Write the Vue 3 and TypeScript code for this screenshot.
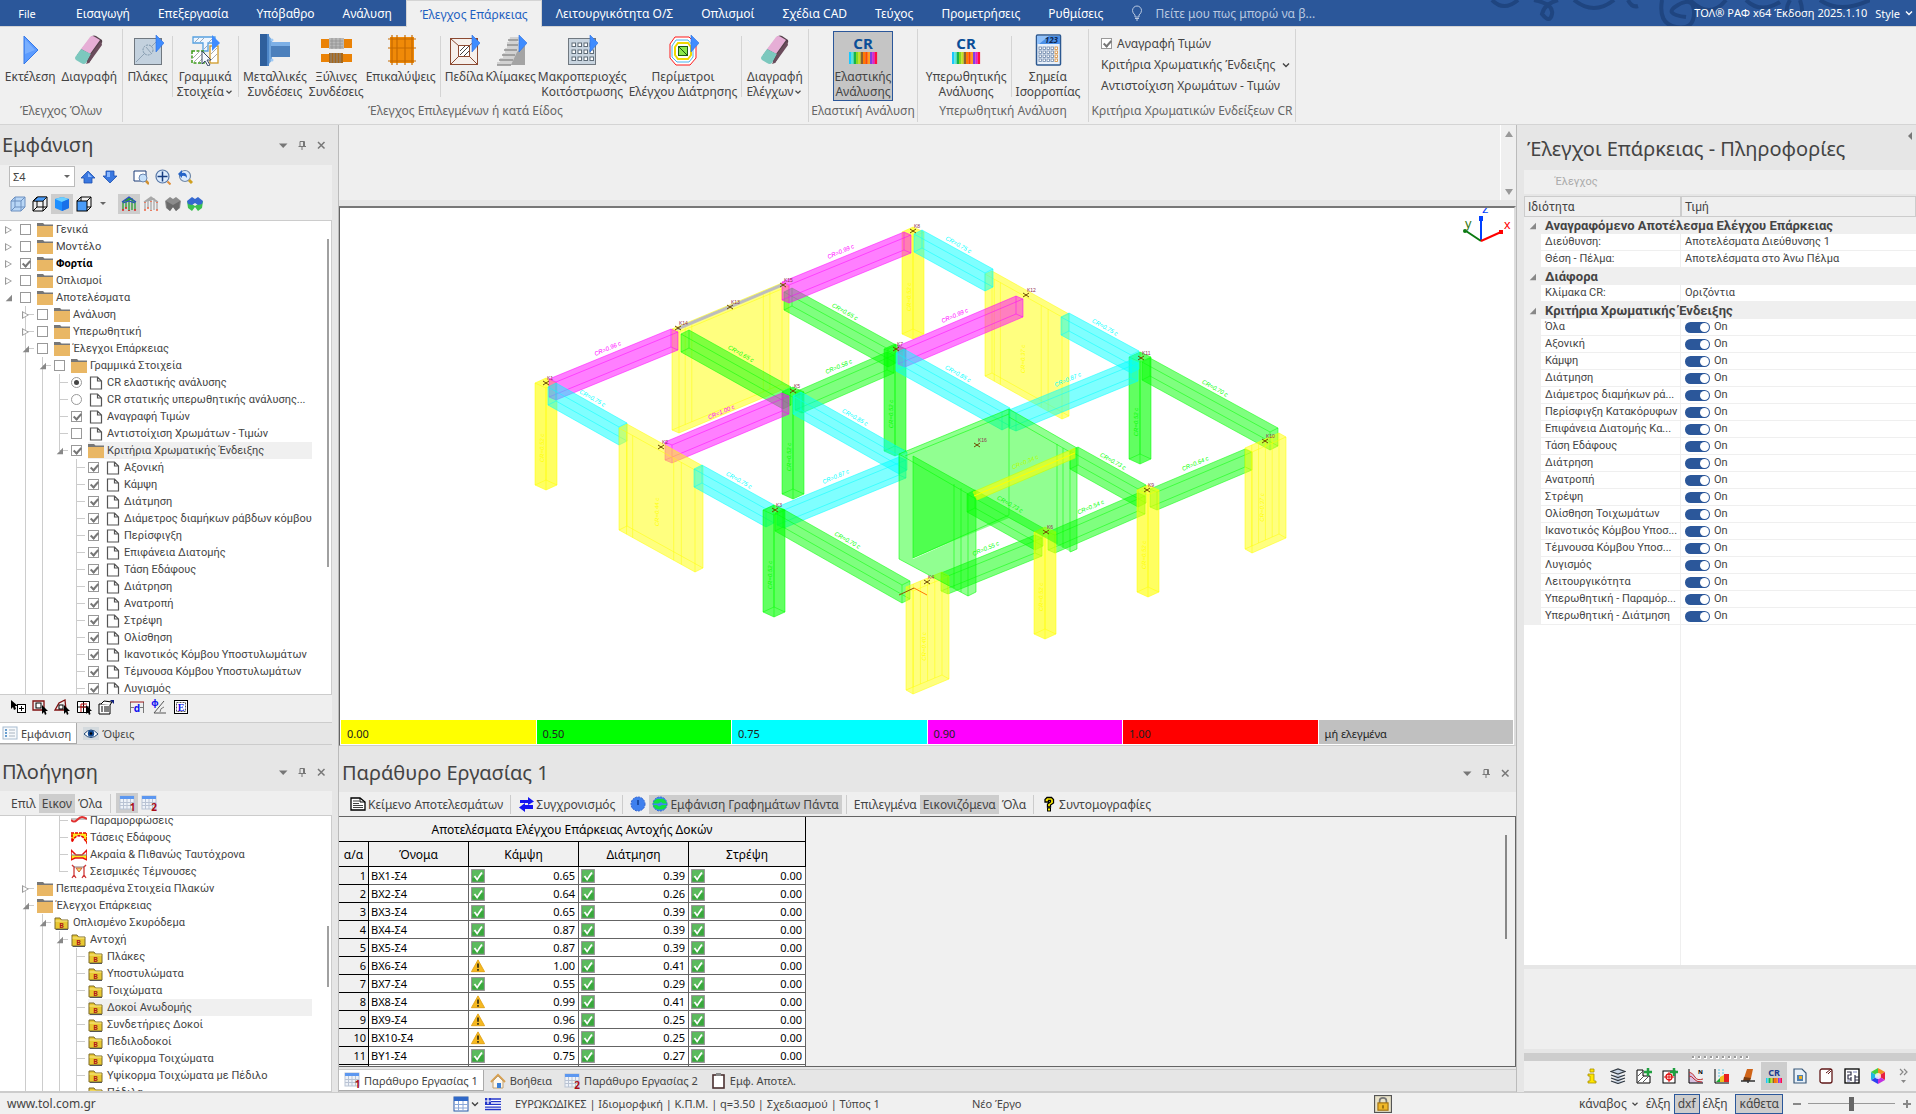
<script setup lang="ts">
import { ref } from 'vue'

/* ---------- icons ---------- */
const play = '<path d="M24 1l8 8-8 9z" fill="#3f8cff" stroke="#2a6fe0" stroke-width=".6"/>'
const table16 =
  '<rect x="1" y="1" width="14" height="13" fill="#eef2f8" stroke="#b9c3d4" stroke-width="1"/><rect x="1" y="1" width="14" height="3" fill="#5c97f0"/><path d="M1 7.500h14M1 10.500h14M4.500 4v10M8 4v10M11.500 4v10" stroke="#b9c3d4" stroke-width="1"/>'
const folderB =
  '<path d="M1 3h5l1.500 2H14v9H1z" fill="#e8c832" stroke="#7d6a2a"/><path d="M1.500 5.500h12v1h-12z" fill="#fbe98a"/><path d="M14 14.500H2" stroke="#555"/><text x="7.500" y="13" font-size="7" font-weight="700" fill="#b01818" text-anchor="middle" font-family="Noto Sans">B</text>'
const rainbow = (x: number, y: number, w: number, h: number) =>
  ['#19c8ff', '#58e6d8', '#18b34a', '#86d820', '#c8e020', '#8a6030', '#ff7a00', '#ff4a00', '#ff9a20', '#8040e0', '#e020d0', '#ff1040']
    .map((c, i, a) => `<rect x="${x + (i * w) / a.length}" y="${y}" width="${w / a.length + 0.1}" height="${h}" fill="${c}"/>`)
    .join('')

const icons: Record<string, string> = {
  run: '<path d="M10 2l14 14-14 14z" fill="#5b9bff" stroke="#3478e8"/><path d="M11 5l10 11-10 4z" fill="#8dbcff" opacity=".6"/>',
  eraser:
    '<path d="M19 2q2-1 4 0l6 4q1 2-1 4L16 29l-12-8z" fill="#54404a"/><path d="M17 3q2-2 5 0l5 3L17 20 8 15z" fill="#e6aed6"/><path d="M8 15l10 5-5 9q-2 2-5 0l-5-3q-2-2 0-4z" fill="#7cc8be"/><path d="M18 20L28 7l1 4-13 18-3 1z" fill="#6b4c5c"/>',
  slab: `<rect x="2.500" y="4.500" width="27" height="26" fill="#c3d1de" stroke="#707880"/><circle cx="16" cy="16" r="5" fill="none" stroke="#7d95aa" stroke-dasharray="2 1"/><path d="M4 28l9-9M19 13l5-5M14 13l5 6" stroke="#8fa3b5"/>${play}`,
  linear: `<path d="M4 3h22v6h-7v8h-5V9H4z" fill="#eef6ff" stroke="#55a0e0" stroke-width="1.300"/><path d="M6 8l4-4M11 8l4-4M15 15l4-4M20 8l4-4" stroke="#9ab"/><rect x="3" y="17" width="12" height="12" fill="#fff" stroke="#3c9a18" stroke-width="1.500" stroke-dasharray="3 1.500"/><path d="M4 24l6-6M5 28l9-9M10 28l5-5" stroke="#aaa"/><rect x="21" y="12" width="8" height="17" fill="#fff" stroke="#d09a28" stroke-width="1.300"/><path d="M22 20l6-6M22 26l6-6" stroke="#aaa"/><path d="M13 17v13l3-3 3 5 2-1-3-5h4z" fill="#f6f9ff" stroke="#3a4a68"/><path d="M23 1l8 8-8 8z" fill="#3f8cff"/>`,
  metal:
    '<path d="M1 0h9v32H1z" fill="#2f5f9c"/><path d="M8 0h2v32H8z" fill="#4d86c8"/><path d="M10 2l3 4v20l-3 4z" fill="#6fa4dc"/><path d="M12 8h19v15H12z" fill="#4c80bc"/><path d="M12 8h19v4H12z" fill="#7db0e6"/><circle cx="13" cy="6" r="1.500" fill="#9cc8f4"/><circle cx="13" cy="26" r="1.500" fill="#9cc8f4"/>',
  wood:
    '<rect x="1" y="5" width="31" height="9" fill="#ea8206"/><rect x="9" y="4" width="15" height="11" fill="#b8b8b8"/><path d="M10 7h13M10 10h13M10 13h13M12 4v11M16 4v11M20 4v11" stroke="#8d8d8d" stroke-width=".7"/><path d="M1 20h31v8H1z" fill="#ea8206"/><path d="M9 19h14v10H9z" fill="#a8681a"/><path d="M11 19v10M14 19v10M17 19v10M20 19v10" stroke="#8a8a8a"/>',
  overlay:
    '<rect x="5" y="3" width="24" height="26" fill="#f08a08"/><path d="M3 5h28M3 14h28M3 27h28M7 1v30M12 1v30M20 1v30M27 1v30" stroke="#c66a00" stroke-width="1.200"/>',
  footing: `<rect x="2.500" y="4.500" width="27" height="26" fill="#f6f0ec" stroke="#8c4a32"/><rect x="10.500" y="11.500" width="11" height="11" fill="#fff" stroke="#8c4a32"/><path d="M3 5l8 7M29 5l-8 7M3 30l8-8M29 30l-8-8" stroke="#8c4a32"/><path d="M12 17l5-5M12 21l9-9M16 22l5-5" stroke="#444"/>${play}`,
  stairs: `<path d="M15 3h10v4h-3l8 8v16H2v-3h3v-4h3v-5h2v-5h2V8h2z" fill="#d2d2d2"/><path d="M13 6h10M12 11h11M9 16h13M7 21h13M4 26h14M2 31h14" stroke="#909090" stroke-width="1.500"/><path d="M22 18l8-7v20H16z" fill="#a4a4a4"/>${play}`,
  macro: `<rect x="2.500" y="4.500" width="27" height="26" fill="#c8d4df" stroke="#707880"/>${[0, 1, 2, 3].map((c) => [0, 1, 2].map((r) => `<rect x="${6 + c * 6}" y="${9 + r * 7}" width="3.500" height="3.500" fill="#fff" stroke="#5f6c78"/>`).join('')).join('')}${play}`,
  perimeter: `<path d="M8 3h14l7 7v14l-6 7H9l-6-7V10z" fill="#fff" stroke="#ff1818"/><path d="M9 6h12l5 6v11l-4 5H10l-5-5V12z" fill="#fff" stroke="#48b4f0"/><path d="M11 9h10l3 4v8l-3 4H11l-3-4v-8z" fill="#fff" stroke="#f0d800" stroke-width="2"/><rect x="11.500" y="12.500" width="9" height="9" fill="#8ce84c" stroke="#1b5a10"/><path d="M12 13l8 8" stroke="#1b5a10"/>${play}`,
  cr: `<text x="16" y="15" font-size="15" font-weight="700" fill="#0a4e98" text-anchor="middle" font-family="Noto Sans">CR</text>${rainbow(2, 18, 28, 12)}`,
  calc: '<rect x="4.500" y="1" width="24" height="30" rx="1" fill="#e8f0fa" stroke="#2c5890" stroke-width="1.500"/><rect x="5" y="2" width="23" height="8" fill="#4a90e8"/><path d="M5 2h12L7 10H5z" fill="#8fc0fa"/><text x="26" y="9" font-size="8" font-weight="700" font-style="italic" fill="#102850" text-anchor="end" font-family="Noto Sans">123</text>' +
    [0, 1, 2, 3, 4].map((c) => [0, 1, 2, 3].map((r) => `<rect x="${7 + c * 4}" y="${13 + r * 4}" width="2.500" height="2.500" fill="#fff" stroke="${c === 4 ? '#d88a30' : '#6a84a8'}" stroke-width=".8"/>`).join('')).join(''),
  up: '<path d="M8 2l7 7h-3v5H4V9H1z" fill="#3a78e0" stroke="#1c4fb0" stroke-width=".8"/><path d="M8 4l4 4H8z" fill="#8ab8ff"/>',
  down: '<path d="M8 14l7-7h-3V2H4v5H1z" fill="#3a78e0" stroke="#1c4fb0" stroke-width=".8"/><path d="M5 3h3v5H5z" fill="#8ab8ff"/>',
  zoomwin: '<path d="M1 2h12v10H1z" fill="#fff" stroke="#1c3c78"/><circle cx="10" cy="9" r="4" fill="#c6e0fa" stroke="#6a86b0"/><path d="M13 12l3 3" stroke="#d09030" stroke-width="2.500"/>',
  zoomall: '<circle cx="7.500" cy="7.500" r="6.500" fill="#dcebfc" stroke="#5878a8" stroke-width="1.200"/><path d="M7.500 2.500v10M2.500 7.500h10" stroke="#173c80" stroke-width="1.500"/><path d="M12.500 12.500l3 3" stroke="#e09040" stroke-width="2"/>',
  zoomprev: '<circle cx="8" cy="7" r="5.500" fill="#dcebfc" stroke="#7088a8" stroke-width="1.200"/><path d="M1 5l4-4v3q5-1 5 5-2-3-5-2v2z" fill="#2464c8"/><path d="M12 11l3 3" stroke="#d0a020" stroke-width="3"/>',
  cubeA: '<path d="M1 5l4-4h10v10l-4 4H1z" fill="#b8d6f6" stroke="#6c90c0"/><path d="M1 5h10v10M11 5l4-4M5 1v10h10M5 11l-4 4" stroke="#6c90c0" fill="none"/>',
  cubeB: '<path d="M1 5h10v10H1zM5 1h10v10H5zM1 5l4-4M11 5l4-4M11 15l4-4M1 15l4-4" fill="none" stroke="#000"/><path d="M2 5l4-4h9l-4 4z" fill="#4a9cf8" stroke="#000" stroke-width=".6"/>',
  cubeC: '<path d="M8 1l7 2v9l-7 3-7-3V3z" fill="#1f8fff"/><path d="M8 1l7 2-7 3-7-3z" fill="#6cd0ff"/><path d="M8 6l7-3v9l-7 3z" fill="#1a70e8"/>',
  cubeD: '<path d="M5 1h10v10H5zM1 5l4-4M11 5l4-4M11 15l4-4M1 15l4-4" fill="none" stroke="#000"/><rect x="1" y="5" width="10" height="10" fill="#4a9cf8" stroke="#000"/>',
  frameA: '<path d="M2 14V6l6-4 6 4v8M5 12V5l6-2v8M8 2v13M11 4v10" fill="none" stroke="#2a9c30" stroke-width="1.300"/><path d="M1 6l7-5 7 5M2 7l6-2 6 2" fill="none" stroke="#2850c0" stroke-width="1.300"/><path d="M2 13v2M5 11v2M8 14v1M14 13v2" stroke="#e02020" stroke-width="1.500"/>',
  frameB: '<path d="M2 14V6l6-4 6 4v8M5 12V5l6-2v8M8 2v13M11 4v10M1 6l7-5 7 5" fill="none" stroke="#a8a8a8" stroke-width="1.300"/><path d="M2 13v2M5 11v2M8 14v1M14 13v2M2 6v1M8 5v1M14 6v1" stroke="#f07050" stroke-width="1.600"/>',
  shadeA: '<path d="M0 5l5-4 3 2 3-2 5 4-1 7-4 3-3-4-3 4-4-3z" fill="#8c8c8c"/><path d="M1 5l7 4 7-4-1 7-3 3-3-4-3 4-3-3z" fill="#6a6a6a"/>',
  shadeB: '<path d="M0 5l8 5 8-5-1 7-4 3-3-4-3 4-4-3z" fill="#3cc050"/><path d="M0 5l5-4 3 2 3-2 5 4-1 3-4 1-3-2-3 2-4-1z" fill="#3468d0"/>',
  folder: '<path d="M0 1h6l1.500 1.500H16V4H0z" fill="#777"/><rect x="0" y="4" width="16" height="11" fill="#e9b765"/>',
  doc: '<path d="M2.500 2h7l4 4v8h-11zM9.500 2v4h4" fill="#fff" stroke="#555" stroke-width="1.200"/>',
  folderB,
  deform: '<path d="M0 6h16" stroke="#888"/><path d="M0 7q3 3 6 0t5-3 5 2" fill="none" stroke="#e03030" stroke-width="2"/>',
  stress: '<path d="M0 3h16v10l-5-7q-5-3-7 2L1 12z" fill="#ffe820"/><path d="M0 3h16v10l-4-6Q5 3 1 12V4" fill="none" stroke="#e80000" stroke-width="1.600" stroke-dasharray="3 1"/>',
  extreme: '<path d="M0 8h16v5q-8-5-16 0z" fill="#ffe820"/><path d="M0 3v10l4-2h8l4 2V3l-5 5H5z" fill="none" stroke="#e81010" stroke-width="1.500"/><path d="M0 8h16" stroke="#888"/>',
  seismic: '<path d="M3 2v10M13 2v10M1 14l2-3 2 3M11 14l2-3 2 3M1 1l3 3M15 1l-3 3" fill="none" stroke="#d03838" stroke-width="1.300"/><path d="M3 3h10" stroke="#888"/><path d="M5 4h6L8 8z" fill="#f0e070" stroke="#d06038"/>',
  selAdd: '<path d="M1 1v9l2-2 1 3 2-1-1-3h3z" fill="#000"/><rect x="7.500" y="5.500" width="8" height="8" fill="#fff" stroke="#000"/><path d="M11.500 7v5M9 9.500h5" stroke="#000"/>',
  selRect: '<path d="M1 2h11v9H1z" fill="none" stroke="#801010" stroke-width="1.300"/><rect x="4" y="4" width="5" height="5" fill="#fff" stroke="#000"/><path d="M10 6v9l2-2 1 3 1.500-1-1-3H16z" fill="#000"/>',
  selPoly: '<path d="M1 11l4-7 6-3 1 10z" fill="none" stroke="#801010" stroke-width="1.300"/><rect x="5" y="6" width="4" height="4" fill="#fff" stroke="#000"/><path d="M10 6v9l2-2 1 3 1.500-1-1-3H16z" fill="#000"/>',
  selFence: '<path d="M1.500 2.500h12v11h-12zM1.500 8h12M7.500 2.500v11" fill="#fff" stroke="#000"/><path d="M5 13V5h6M4 8h6" stroke="#c01010" fill="none"/><path d="M10 6v9l2-2 1 3 1.500-1-1-3H16z" fill="#000"/>',
  props: '<path d="M1 5h11v10H1z" fill="#fff" stroke="#000"/><path d="M3 8h2M3 10h2M3 12h2M6 8h5M6 10h5M6 12h5" stroke="#000"/><path d="M3 5l3-3 8 1-2 3" fill="#fff" stroke="#000"/><path d="M12 1h4v4z" fill="#102080"/>',
  dimD: '<path d="M1.500 3v11M14.500 3v11M2 8.500h3M11 8.500h3" stroke="#777"/><path d="M1 3h14" stroke="#a01818"/><text x="8" y="13" font-size="10" font-weight="700" fill="#1010f0" text-anchor="middle" font-family="Noto Sans">d</text>',
  phi: '<path d="M3 14L13 2M3 14h12" stroke="#555"/><path d="M13 8q-4 1-4 5" fill="none" stroke="#777"/><text x="4" y="7" font-size="9" font-weight="700" fill="#1010f0" text-anchor="middle" font-family="Noto Sans">φ</text>',
  boxE: '<rect x="1.500" y="1.500" width="13" height="13" fill="#fff" stroke="#000"/><rect x="3.500" y="3.500" width="9" height="9" fill="none" stroke="#555" stroke-dasharray="2 1"/><text x="8" y="12" font-size="10" font-weight="700" fill="#1010f0" text-anchor="middle" font-family="Liberation Serif">E</text>',
  list: '<rect x="1" y="2" width="14" height="12" fill="#f6f9fc" stroke="#a8bcd0"/><path d="M3 5h2M3 8h2M3 11h2" stroke="#3a80c0" stroke-width="1.500"/><path d="M7 5h6M7 8h6M7 11h6" stroke="#a8b4c0"/>',
  eye: '<rect x="0" y="1" width="16" height="13" fill="#d4dade"/><path d="M1 8q7-8 14 0-7 7-14 0z" fill="#fff" stroke="#204878"/><circle cx="8" cy="7.500" r="3.200" fill="#104890"/><circle cx="8" cy="7.500" r="1.300" fill="#000"/>',
  win1: `${table16}<text x="13.500" y="15.500" font-size="10" font-weight="700" fill="#a80c18" text-anchor="middle" font-family="Noto Sans">1</text>`,
  win2: `${table16}<text x="13" y="15.500" font-size="10" font-weight="700" fill="#a80c18" text-anchor="middle" font-family="Noto Sans">2</text>`,
  grid: '<rect x="1" y="1" width="14" height="14" fill="#fff" stroke="#2858a8"/><rect x="1" y="1" width="14" height="4" fill="#2f68c8"/><path d="M1 8.500h14M1 12h14M5.500 5v10M10 5v10" stroke="#8aa8d8"/>',
  text: '<path d="M1 2h9l5 4v8H1z" fill="#fff" stroke="#000" stroke-width="1.300"/><path d="M10 2v4h5" fill="none" stroke="#000"/><path d="M3 5h6M3 7.500h6M3 9.500h10M3 11.500h10" stroke="#444"/>',
  sync: '<path d="M2 4h8V1l6 4.500L10 9V7H2zM15 9H7V7l-6 4.500L7 16v-3h8z" fill="#1414f0"/>',
  clock: '<circle cx="8" cy="8" r="7" fill="#3f80ee" stroke="#2b5fd0" stroke-dasharray="2 1"/><path d="M8 4v5" stroke="#123c90" stroke-width="1.500"/>',
  globe: '<circle cx="8" cy="8" r="7" fill="#4088f0" stroke="#2b66d8" stroke-dasharray="2 1"/><path d="M1 7.500Q3 2 8 3q5-1 7 4.500h-4L9 6 6 7.500z" fill="#10e040"/><path d="M1 9h4l2 1.500L10 9h5q-2 5-7 4.500Q3 14 1 9z" fill="#10e040"/>',
  help: '<path d="M4 5V3.500L6 1.500h4.500l2 2V7L9.500 9v2h-3V8l3-2V4.500h-2V6H4z" fill="#ffee00" stroke="#000" stroke-width="1.300"/><rect x="6.500" y="12" width="3" height="3" fill="#ffee00" stroke="#000"/>',
  home: '<path d="M1 9l7-7 7 7" fill="none" stroke="#d8a050" stroke-width="2"/><path d="M3 8l5-5 5 5v7H3z" fill="#fdf8ee" stroke="#c0a070"/><rect x="7" y="10" width="4" height="5" fill="#3a80d8"/>',
  clip: '<rect x="3" y="2" width="11" height="13" fill="#fff" stroke="#4a3030" stroke-width="1.600"/><rect x="6" y="0" width="5" height="3" fill="#888"/>',
  ok: '<rect x="0.500" y="0.500" width="15" height="15" rx="1.500" fill="#38a83c" stroke="#9a9a9a" stroke-width="1.600"/><path d="M1.500 1.500h13v5l-13 4z" fill="#74c874" opacity=".6"/><path d="M4 8l3 4 5.500-8" fill="none" stroke="#fff" stroke-width="2"/>',
  warn: '<path d="M8 1l7.500 13.500H.5z" fill="#f5b820" stroke="#e0a010" stroke-linejoin="round"/><path d="M8 5v5M8 11.500v1.800" stroke="#3a3010" stroke-width="2"/>',
  flag: '<rect x="0" y="2" width="16" height="12" fill="#fff"/><path d="M0 3h16M0 5.700h16M0 8.400h16M0 11.100h16M0 13.500h16" stroke="#2436c8" stroke-width="1.300"/><rect x="0" y="2" width="6" height="6" fill="#2436c8"/><path d="M3 2v6M0 5h6" stroke="#fff" stroke-width="1.200"/>',
  lock: '<rect x=".5" y=".5" width="15" height="15" fill="#e8e2c8" stroke="#555"/><path d="M5 7V5q0-2.500 3-2.500T11 5v2" fill="none" stroke="#777" stroke-width="1.500"/><rect x="3.500" y="7" width="9" height="6.500" fill="#f0b828" stroke="#a07010"/><path d="M8 9v3" stroke="#604000"/>',
  bulb: '<path d="M6 10q-2.500-2-2.500-4.500a4.500 4.500 0 0 1 9 0Q12.500 8 10 10v2H6zM6 13.500h4M7 15h2" fill="none" stroke="#b9c8e0"/>',
  info: '<path d="M6 1h4v3H6zM4 6h6v7h2v2H4v-2h2V8H4z" fill="#ffe600" stroke="#a89000" stroke-width=".8"/>',
  layers: '<path d="M1 3.500l7-2.500 7 2.500-7 2.500zM1 7l7 2.500L15 7M1 10l7 2.500 7-2.500M1 13l7 2.500 7-2.500" fill="#c8d4e4" stroke="#303840" stroke-width="1.200"/>',
  hatchAdd: '<path d="M1 2h6v6h7v7H1z" fill="#fff" stroke="#000"/><path d="M2 8l5-5M2 14l6-6M7 14l6-6" stroke="#555"/><path d="M12 0v8M8 4h8" stroke="#20a040" stroke-width="2.500"/>',
  nodeAdd: '<rect x="1" y="3" width="12" height="12" fill="#fff" stroke="#000"/><circle cx="7" cy="9" r="3" fill="none" stroke="#e01010" stroke-width="1.300"/><path d="M7 4v10M2 9h10" stroke="#e01010"/><path d="M12 0v8M8 4h8" stroke="#20a040" stroke-width="2.500"/>',
  curve: '<path d="M1 5q4 0 6 5t8 3v2H1z" fill="#d8c0e0"/><path d="M1 1v14h14" fill="none" stroke="#000"/><path d="M1 4q4 1 6 5t8 2M1 8q3 0 5 3t8 3" fill="none" stroke="#c03030"/><text x="12.500" y="6" font-size="6" font-weight="700" fill="#000" text-anchor="middle" font-family="Noto Sans">N</text>',
  bars: '<path d="M1 1v14h14" fill="none" stroke="#000"/><path d="M2 14l4-4v4z" fill="#18b030"/><path d="M6 9l4-2v7H6z" fill="#f0c020"/><rect x="10" y="6" width="5" height="8" fill="#e82020"/><path d="M5 1v8M9 1v5" stroke="#58c8e8" stroke-dasharray="2 1"/>',
  clean: '<path d="M7 1h6l-2 9H4z" fill="#d06418"/><path d="M4 9l7 1-1 3H3z" fill="#783c10"/><path d="M1 13h14M8 12v3" stroke="#333" stroke-width="1.500"/>',
  crSmall: `<text x="8" y="8" font-size="9" font-weight="700" fill="#203c90" text-anchor="middle" font-family="Noto Sans">CR</text>${rainbow(0, 10, 16, 5)}`,
  report: '<path d="M2 1h8l4 4v10H2z" fill="#e8f0f8" stroke="#385878" stroke-width="1.200"/><rect x="5" y="7" width="6" height="6" fill="#5080b0"/><rect x="7" y="8" width="3" height="3" fill="#f0b020"/>',
  sheet: '<rect x="2" y="1" width="12" height="14" rx="2" fill="#fff" stroke="#601818" stroke-width="1.300"/><path d="M8 5l5-4M10 6l3-3" stroke="#601818"/>',
  plan: '<rect x="1" y="1" width="14" height="14" fill="#fff" stroke="#000" stroke-width="1.300"/><path d="M3 4h4v3H4v4h3M7 13V9M11 9h4M11 15V7M11 12h4" stroke="#303048" fill="none" stroke-width="1.200"/><path d="M3 13h3M9 4h4" stroke="#8088c0"/>',
  wheel: '<path d="M8 8L8 0l7 4z" fill="#f09020"/><path d="M8 8l7-4v8z" fill="#e82040"/><path d="M8 8l7 4-7 4z" fill="#c030e0"/><path d="M8 8v8l-7-4z" fill="#3040f0"/><path d="M8 8L1 12V4z" fill="#20b8e0"/><path d="M8 8L1 4l7-4z" fill="#40d040"/><circle cx="8" cy="8" r="3" fill="#fff" opacity=".8"/>',
  pin: '<path d="M4 2.500h4.500v5H4zM7.500 2.500v5M2.500 7.500h7.500M6 7.500V11" fill="none" stroke="#777"/>',
  close: '<path d="M3 3l6.500 6.500M9.500 3L3 9.500" stroke="#777" stroke-width="1.500"/>',
  caret: '<path d="M2 4.500h8.500L6.200 9z" fill="#777"/>',
  chev: '<path d="M3 4.500l3 3 3-3" fill="none" stroke="currentColor" stroke-width="1.400"/>',
}

/* ---------- menu and ribbon ---------- */
const menus = ['Εισαγωγή', 'Επεξεργασία', 'Υπόβαθρο', 'Ανάλυση', 'Έλεγχος Επάρκειας', 'Λειτουργικότητα Ο/Σ', 'Οπλισμοί', 'Σχέδια CAD', 'Τεύχος', 'Προμετρήσεις', 'Ρυθμίσεις']

interface Cmd { icon?: string; lines?: string[]; drop?: boolean; on?: boolean }
interface Group { id: string; title: string; items: Cmd[] }
const sep: Cmd = {}
const groups: Group[] = [
  { id: 'all', title: 'Έλεγχος Όλων', items: [{ icon: 'run', lines: ['Εκτέλεση'] }, { icon: 'eraser', lines: ['Διαγραφή'] }] },
  {
    id: 'kind', title: 'Έλεγχος Επιλεγμένων ή κατά Είδος',
    items: [
      { icon: 'slab', lines: ['Πλάκες'] }, sep,
      { icon: 'linear', lines: ['Γραμμικά', 'Στοιχεία'], drop: true }, sep,
      { icon: 'metal', lines: ['Μεταλλικές', 'Συνδέσεις'] }, { icon: 'wood', lines: ['Ξύλινες', 'Συνδέσεις'] }, { icon: 'overlay', lines: ['Επικαλύψεις'] }, sep,
      { icon: 'footing', lines: ['Πεδίλα'] }, { icon: 'stairs', lines: ['Κλίμακες'] }, { icon: 'macro', lines: ['Μακροπεριοχές', 'Κοιτόστρωσης'] }, { icon: 'perimeter', lines: ['Περίμετροι', 'Ελέγχου Διάτρησης'] }, sep,
      { icon: 'eraser', lines: ['Διαγραφή', 'Ελέγχων'], drop: true },
    ],
  },
  { id: 'elastic', title: 'Ελαστική Ανάλυση', items: [{ icon: 'cr', lines: ['Ελαστικής', 'Ανάλυσης'], on: true }] },
  { id: 'pushover', title: 'Υπερωθητική Ανάλυση', items: [{ icon: 'cr', lines: ['Υπερωθητικής', 'Ανάλυσης'] }, sep, { icon: 'calc', lines: ['Σημεία', 'Ισορροπίας'] }] },
]
const showValues = ref(true)

/* ---------- trees ---------- */
interface Node { g: string; exp?: 'open' | 'closed'; ctl?: 'check' | 'radio'; on?: boolean; icon: string; label: string; bold?: boolean; sel?: boolean }
const leafNames = ['Αξονική', 'Κάμψη', 'Διάτμηση', 'Διάμετρος διαμήκων ράβδων κόμβου', 'Περίσφιγξη', 'Επιφάνεια Διατομής', 'Τάση Εδάφους', 'Διάτρηση', 'Ανατροπή', 'Στρέψη', 'Ολίσθηση', 'Ικανοτικός Κόμβου Υποστυλωμάτων', 'Τέμνουσα Κόμβου Υποστυλωμάτων', 'Λυγισμός']
const display = ref<Node[]>([
  { g: ' ', exp: 'closed', ctl: 'check', icon: 'folder', label: 'Γενικά' },
  { g: ' ', exp: 'closed', ctl: 'check', icon: 'folder', label: 'Μοντέλο' },
  { g: ' ', exp: 'closed', ctl: 'check', on: true, icon: 'folder', label: 'Φορτία', bold: true },
  { g: ' ', exp: 'closed', ctl: 'check', icon: 'folder', label: 'Οπλισμοί' },
  { g: ' ', exp: 'open', ctl: 'check', icon: 'folder', label: 'Αποτελέσματα' },
  { g: ' t', exp: 'closed', ctl: 'check', icon: 'folder', label: 'Ανάλυση' },
  { g: ' t', exp: 'closed', ctl: 'check', icon: 'folder', label: 'Υπερωθητική' },
  { g: ' t', exp: 'open', ctl: 'check', icon: 'folder', label: 'Έλεγχοι Επάρκειας' },
  { g: ' |t', exp: 'open', ctl: 'check', icon: 'folder', label: 'Γραμμικά Στοιχεία' },
  { g: ' ||t', ctl: 'radio', on: true, icon: 'doc', label: 'CR ελαστικής ανάλυσης' },
  { g: ' ||t', ctl: 'radio', icon: 'doc', label: 'CR στατικής υπερωθητικής ανάλυσης...' },
  { g: ' ||t', ctl: 'check', on: true, icon: 'doc', label: 'Αναγραφή Τιμών' },
  { g: ' ||t', ctl: 'check', icon: 'doc', label: 'Αντιστοίχιση Χρωμάτων - Τιμών' },
  { g: ' ||L', exp: 'open', ctl: 'check', on: true, icon: 'folder', label: 'Κριτήρια Χρωματικής Ένδειξης', sel: true },
  ...leafNames.map((label): Node => ({ g: ' || t', ctl: 'check', on: true, icon: 'doc', label })),
])
const nav: Node[] = [
  { g: ' | t', icon: 'deform', label: 'Παραμορφώσεις' },
  { g: ' | t', icon: 'stress', label: 'Τάσεις Εδάφους' },
  { g: ' | t', icon: 'extreme', label: 'Ακραία & Πιθανώς Ταυτόχρονα' },
  { g: ' | L', icon: 'seismic', label: 'Σεισμικές Τέμνουσες' },
  { g: ' t', exp: 'closed', icon: 'folder', label: 'Πεπερασμένα Στοιχεία Πλακών' },
  { g: ' t', exp: 'open', icon: 'folder', label: 'Έλεγχοι Επάρκειας' },
  { g: ' |t', exp: 'open', icon: 'folderB', label: 'Οπλισμένο Σκυρόδεμα' },
  { g: ' ||t', exp: 'open', icon: 'folderB', label: 'Αντοχή' },
  ...['Πλάκες', 'Υποστυλώματα', 'Τοιχώματα', 'Δοκοί Ανωδομής', 'Συνδετήριες Δοκοί', 'Πεδιλοδοκοί', 'Υψίκορμα Τοιχώματα', 'Υψίκορμα Τοιχώματα με Πέδιλο', 'Πέδιλα'].map(
    (label): Node => ({ g: ' |||t', icon: 'folderB', label, sel: label === 'Δοκοί Ανωδομής' }),
  ),
]
const guide = (c: string) => ({ '|': 'g-bar', t: 'g-tee', L: 'g-end' })[c] ?? ''

/* ---------- model ---------- */
type V = [number, number]
interface Box { c: string; a: V; u: V; v: V; h: number; o?: number; cuts?: number[]; label?: string }
const Y = '#ff0', G = '#0f0', C = '#0ff', M = '#f0f'
const col = (c: string, x: number, y: number): Box => ({ c, a: [x, y], u: [11, -5], v: [11, 5], h: 102, o: 0.62, label: 'CR=0.52 c' })
const rise = (c: string, x: number, y: number, lx: number, ly: number, label: string): Box => ({ c, a: [x, y], u: [lx, ly], v: [7, 3], h: 18, label })
const fall = (c: string, x: number, y: number, lx: number, ly: number, label: string): Box => ({ c, a: [x, y], u: [8, -4], v: [lx, ly], h: 18, label })
const boxes: Box[] = [
  { c: Y, a: [672, 329], u: [110, -46], v: [7, 3], h: 101, cuts: [0.12, 0.18, 0.83, 0.89] },
  { c: Y, a: [985, 274], u: [7, -3], v: [77, 43], h: 102, cuts: [0.12, 0.2, 0.73, 0.82], label: 'CR=0.37 c' },
  col(Y, 902, 232),
  col(G, 782, 392), col(G, 884, 349), col(G, 1129, 357), col(Y, 535, 383),
  fall(G, 784, 292, 104, 57, 'CR=0.65 c'),
  fall(G, 681, 334, 102, 57, 'CR=0.65 c'),
  rise(G, 795, 392, 92, -40, 'CR=0.58 c'),
  rise(M, 549, 379, 122, -50, 'CR=0.96 c'),
  rise(M, 782, 282, 122, -50, 'CR=0.99 c'),
  rise(M, 665, 442, 117, -49, 'CR=1.00 c'),
  rise(M, 898, 346, 118, -50, 'CR=0.99 c'),
  fall(C, 548, 387, 71, 40, 'CR=0.75 c'),
  fall(C, 914, 234, 71, 39, 'CR=0.75 c'),
  fall(C, 1061, 317, 70, 38, 'CR=0.75 c'),
  fall(C, 793, 396, 106, 60, 'CR=0.85 c'),
  fall(C, 896, 353, 106, 59, 'CR=0.85 c'),
  rise(C, 1009, 410, 122, -50, 'CR=0.87 c'),
  rise(C, 777, 507, 122, -50, 'CR=0.87 c'),
  { c: Y, a: [619, 428], u: [8, -4], v: [76, 42], h: 102, cuts: [0.1, 0.18, 0.72, 0.82], label: 'CR=0.44 c' },
  fall(C, 694, 469, 72, 40, 'CR=0.75 c'),
  col(G, 763, 510),
  fall(G, 775, 513, 127, 72, 'CR=0.70 c'),
  fall(G, 1142, 362, 128, 70, 'CR=0.70 c'),
  fall(G, 1070, 451, 68, 38, 'CR=0.73 c'),
  fall(G, 967, 494, 68, 38, 'CR=0.73 c'),
  rise(G, 1150, 489, 95, -40, 'CR=0.64 c'),
  rise(G, 1048, 532, 90, -39, 'CR=0.54 c'),
  rise(G, 941, 573, 94, -38, 'CR=0.55 c'),
  { c: Y, a: [906, 587], u: [36, -15], v: [7, 4], h: 103, cuts: [0.2, 0.4, 0.6, 0.8], label: 'CR=0.40 c' },
  { c: Y, a: [1245, 448], u: [34, -15], v: [7, 4], h: 101, cuts: [0.2, 0.4, 0.6, 0.8], label: 'CR=0.37 c' },
  col(Y, 1137, 490), col(Y, 1034, 532),
]
const add = (...p: V[]): V => p.reduce((s, q) => [s[0] + q[0], s[1] + q[1]] as V, [0, 0] as V)
const cross = (o: V, a: V, b: V) => (a[0] - o[0]) * (b[1] - o[1]) - (a[1] - o[1]) * (b[0] - o[0])
function hull(points: V[]): V[] {
  const s = [...points].sort((a, b) => a[0] - b[0] || a[1] - b[1])
  const half = (list: V[]) => {
    const out: V[] = []
    for (const p of list) {
      while (out.length > 1 && cross(out[out.length - 2], out[out.length - 1], p) <= 0) out.pop()
      out.push(p)
    }
    out.pop()
    return out
  }
  return [...half(s), ...half([...s].reverse())]
}
const model = boxes.map((b) => {
  const top: V[] = [b.a, add(b.a, b.u), add(b.a, b.u, b.v), add(b.a, b.v)]
  const low = top.map((p) => add(p, [0, b.h]))
  const ring = (r: V[]) => 'M' + r.map((p) => p.join(' ')).join('L') + 'Z'
  const long = Math.abs(b.u[0]) > Math.abs(b.v[0]) ? b.u : b.v
  const cuts = (b.cuts ?? []).map((f) => `M${b.a[0] + long[0] * f} ${b.a[1] + long[1] * f}v${b.h}`).join('')
  const mid = add(b.a, [(b.u[0] + b.v[0]) / 2, (b.u[1] + b.v[1]) / 2])
  const upright = b.h > 50
  const angle = upright ? -90 : long[1] < 0 ? -23 : 29
  const lx = upright ? mid[0] - 2 : mid[0] + (long[1] < 0 ? -5 : 4)
  const ly = upright ? mid[1] + 65 : mid[1] - 5
  return {
    c: b.c, o: b.o ?? 0.5, label: b.label,
    fill: hull([...top, ...low]).map((p) => p.join()).join(' '),
    edges: ring(top) + ring(low) + top.map((p) => `M${p[0]} ${p[1]}v${b.h}`).join('') + cuts,
    place: `translate(${lx} ${ly}) rotate(${angle})`,
  }
})
const nodes: [number, number, string][] = [
  [546, 383, 'K1'], [913, 231, 'K8'], [783, 285, 'K15'], [730, 307, 'K13'], [678, 328, 'K14'], [661, 447, 'K2'], [896, 349, 'K7'], [793, 391, 'K5'],
  [775, 510, 'K3'], [977, 445, 'K16'], [927, 582, 'K4'], [1026, 295, 'K12'], [1141, 358, 'K11'], [1265, 441, 'K10'], [1147, 490, 'K9'], [1046, 532, 'K6'],
]
const scale = [
  { label: '0.00', cls: 'l-y' }, { label: '0.50', cls: 'l-g' }, { label: '0.75', cls: 'l-c' },
  { label: '0.90', cls: 'l-m' }, { label: '1.00', cls: 'l-r' }, { label: 'μή ελεγμένα', cls: 'l-n' },
]

/* ---------- results ---------- */
const results: [string, string, string, boolean][] = [
  ['ΒΧ1-Σ4', '0.65', '0.39', true], ['ΒΧ2-Σ4', '0.64', '0.26', true], ['ΒΧ3-Σ4', '0.65', '0.39', true], ['ΒΧ4-Σ4', '0.87', '0.39', true],
  ['ΒΧ5-Σ4', '0.87', '0.39', true], ['ΒΧ6-Σ4', '1.00', '0.41', false], ['ΒΧ7-Σ4', '0.55', '0.29', true], ['ΒΧ8-Σ4', '0.99', '0.41', false],
  ['ΒΧ9-Σ4', '0.96', '0.25', false], ['ΒΧ10-Σ4', '0.96', '0.25', false], ['ΒΥ1-Σ4', '0.75', '0.27', true],
]

/* ---------- properties ---------- */
interface Prop { name: string; value?: string; head?: boolean; on?: boolean }
const props = ref<Prop[]>([
  { name: 'Αναγραφόμενο Αποτέλεσμα Ελέγχου Επάρκειας', head: true },
  { name: 'Διεύθυνση:', value: 'Αποτελέσματα Διεύθυνσης 1' },
  { name: 'Θέση - Πέλμα:', value: 'Αποτελέσματα στο Άνω Πέλμα' },
  { name: 'Διάφορα', head: true },
  { name: 'Κλίμακα CR:', value: 'Οριζόντια' },
  { name: 'Κριτήρια Χρωματικής Ένδειξης', head: true },
  ...['Όλα', 'Αξονική', 'Κάμψη', 'Διάτμηση', 'Διάμετρος διαμήκων ρά...', 'Περίσφιγξη Κατακόρυφων', 'Επιφάνεια Διατομής Κα...', 'Τάση Εδάφους', 'Διάτρηση', 'Ανατροπή', 'Στρέψη', 'Ολίσθηση Τοιχωμάτων', 'Ικανοτικός Κόμβου Υποσ...', 'Τέμνουσα Κόμβου Υποσ...', 'Λυγισμός', 'Λειτουργικότητα', 'Υπερωθητική - Παραμόρ...', 'Υπερωθητική - Διάτμηση'].map(
    (name): Prop => ({ name, on: true }),
  ),
])
const dock = ['info', 'layers', 'hatchAdd', 'nodeAdd', 'curve', 'bars', 'clean', 'crSmall', 'report', 'sheet', 'plan', 'wheel']
const zoom = ref(50)
</script>

<template>
  <div class="app">
    <header class="menubar">
      <svg class="swirl" viewBox="0 0 380 26" aria-hidden="true">
        <path d="M2 0q12 12 26 0M44 0q20 4 18 14t-10 0q2-10 16-14M84 0q20 16 40 0M138 0q4 8 10 6M172 0q-4 24 14 27t18-14-16-8 8 12M200 0q20 20 36 0M256 0q14 14 34 2M300 0q-8 14 4 16t6-16M330 0q20 14 50 0" />
      </svg>
      <button type="button" class="file">File</button>
      <button v-for="m in menus" :key="m" type="button" class="menu" :class="{ active: m === 'Έλεγχος Επάρκειας' }">{{ m }}</button>
      <label class="tell"><svg viewBox="0 0 16 16" v-html="icons.bulb" /><input type="text" aria-label="Βοήθεια" placeholder="Πείτε μου πως μπορώ να β..." /></label>
      <span class="product">ΤΟΛ® ΡΑΦ x64 Έκδοση 2025.1.10</span>
      <button type="button" class="style">Style <svg viewBox="0 0 12 12" v-html="icons.chev" /></button>
    </header>

    <section class="ribbon">
      <div v-for="g in groups" :key="g.id" class="group" :class="'grp-' + g.id">
        <div class="cmds">
          <template v-for="(c, i) in g.items" :key="i">
            <button v-if="c.icon" type="button" class="cmd" :class="{ on: c.on }">
              <svg viewBox="0 0 32 32" v-html="icons[c.icon]" />
              <span v-for="(l, k) in c.lines" :key="k">{{ l }}<svg v-if="c.drop && k === 1" class="mini" viewBox="0 0 12 12" v-html="icons.chev" /></span>
            </button>
            <i v-else class="vsep"></i>
          </template>
        </div>
        <div class="gtitle">{{ g.title }}</div>
      </div>
      <div class="group grp-crit">
        <div class="crit">
          <label><input v-model="showValues" type="checkbox" class="chk" />Αναγραφή Τιμών</label>
          <button type="button">Κριτήρια Χρωματικής Ένδειξης<svg viewBox="0 0 12 12" v-html="icons.chev" /></button>
          <button type="button">Αντιστοίχιση Χρωμάτων - Τιμών</button>
        </div>
        <div class="gtitle">Κριτήρια Χρωματικών Ενδείξεων CR</div>
      </div>
    </section>

    <main class="work">
      <aside class="left">
        <section class="panel display">
          <header class="phead">
            <h2>Εμφάνιση</h2>
            <button v-for="k in ['caret', 'pin', 'close']" :key="k" type="button" :aria-label="k"><svg viewBox="0 0 12 13" v-html="icons[k]" /></button>
          </header>
          <div class="tools two">
            <div class="trow">
              <span class="combo"><select aria-label="Στάθμη"><option>Σ4</option></select></span>
              <button v-for="k in ['up', 'down']" :key="k" type="button" :aria-label="k" class="tb"><svg viewBox="0 0 16 16" v-html="icons[k]" /></button>
              <i class="gap"></i>
              <button v-for="k in ['zoomwin', 'zoomall', 'zoomprev']" :key="k" type="button" :aria-label="k" class="tb"><svg viewBox="0 0 16 16" v-html="icons[k]" /></button>
            </div>
            <div class="trow second">
              <button v-for="k in ['cubeA', 'cubeB', 'cubeC', 'cubeD']" :key="k" type="button" :aria-label="k" class="tb" :class="{ on: k === 'cubeC' }"><svg viewBox="0 0 16 16" v-html="icons[k]" /></button>
              <i class="tri"></i>
              <button v-for="k in ['frameA', 'frameB', 'shadeA', 'shadeB']" :key="k" type="button" :aria-label="k" class="tb" :class="{ on: k === 'frameA' }"><svg viewBox="0 0 16 16" v-html="icons[k]" /></button>
            </div>
          </div>
          <div class="tree">
            <div v-for="(n, i) in display" :key="i" class="node">
              <span v-for="(c, k) in n.g" :key="k" class="cell" :class="guide(c)"><i v-if="n.exp && k === n.g.length - 1" :class="n.exp"></i></span>
              <input v-if="n.ctl === 'check'" :id="'n' + i" v-model="n.on" type="checkbox" class="chk" />
              <input v-else :id="'n' + i" type="radio" name="cr" class="rad" :checked="n.on" />
              <label :for="'n' + i" class="item" :class="{ sel: n.sel, bold: n.bold }"><svg viewBox="0 0 16 16" v-html="icons[n.icon]" />{{ n.label }}</label>
            </div>
            <i class="thumb first"></i>
          </div>
          <div class="tools pick">
            <button v-for="k in ['selAdd', 'selRect', 'selPoly', 'selFence', 'props']" :key="k" type="button" :aria-label="k" class="tb"><svg viewBox="0 0 16 16" v-html="icons[k]" /></button>
            <i class="gap"></i>
            <button v-for="k in ['dimD', 'phi', 'boxE']" :key="k" type="button" :aria-label="k" class="tb"><svg viewBox="0 0 16 16" v-html="icons[k]" /></button>
          </div>
          <nav class="tabs">
            <button type="button" class="tab on"><svg viewBox="0 0 16 16" v-html="icons.list" />Εμφάνιση</button>
            <button type="button" class="tab"><svg viewBox="0 0 16 16" v-html="icons.eye" />Όψεις</button>
          </nav>
        </section>

        <section class="panel navig">
          <header class="phead">
            <h2>Πλοήγηση</h2>
            <button v-for="k in ['caret', 'pin', 'close']" :key="k" type="button" :aria-label="k"><svg viewBox="0 0 12 13" v-html="icons[k]" /></button>
          </header>
          <div class="tools one">
            <button type="button" class="txt">Επιλ</button><button type="button" class="txt on">Εικον</button><button type="button" class="txt">Όλα</button>
            <i class="bar"></i>
            <button type="button" class="tb on" aria-label="1"><svg viewBox="0 0 16 16" v-html="icons.win1" /></button>
            <button type="button" class="tb" aria-label="2"><svg viewBox="0 0 16 16" v-html="icons.win2" /></button>
          </div>
          <div class="tree">
            <div class="scrolled">
              <div v-for="(n, i) in nav" :key="i" class="node">
                <span v-for="(c, k) in n.g" :key="k" class="cell" :class="guide(c)"><i v-if="n.exp && k === n.g.length - 1" :class="n.exp"></i></span>
                <span class="item" :class="{ sel: n.sel }"><svg viewBox="0 0 16 16" v-html="icons[n.icon]" />{{ n.label }}</span>
              </div>
            </div>
            <i class="thumb second"></i>
          </div>
        </section>
      </aside>

      <section class="centre">
        <div class="strip">
          <div class="arrows"><i class="au"></i><i class="ad"></i></div>
        </div>
        <div class="view">
          <svg class="model" viewBox="340 208 1174 512" preserveAspectRatio="xMidYMid meet">
            <g v-for="(b, i) in model" :key="i" :fill="b.c" :stroke="b.c">
              <polygon :points="b.fill" :fill-opacity="b.o" stroke="none" />
              <path :d="b.edges" fill="none" stroke-width="1" stroke-opacity=".5" />
              <text v-if="b.label" :transform="b.place" class="mlabel">{{ b.label }}</text>
            </g>
            <g fill="#0f0" stroke="#0f0">
              <path d="M899 454L1009 409L1077 448V549L1071 552L1009 518L913 558V559H899Z" fill-opacity=".43" stroke="none" />
              <path d="M913 456L976 491V531L913 558Z" fill-opacity=".45" stroke="none" />
              <path d="M899 559H913L976 531V592L968 596Z" fill-opacity=".43" stroke="none" />
              <path d="M899 454L1009 409L1077 448M899 454V559L968 596L976 592V491L913 456V558L1009 515V409M899 454L968 494M968 494V596M954 484V588M961 488V592M1009 417L1070 452V552L1077 549V448M1057 444V545M1063 448V548M905 456L1009 414" fill="none" stroke-opacity=".55" />
            </g>
            <path d="M973 492L1075 448V458L977 500Z" fill="#ff0" fill-opacity=".6" stroke="#c8ff00" stroke-width=".6" />
            <path d="M974 496L1075 453" stroke="#ff0" />
            <text class="mlabel" transform="translate(1026 464) rotate(-23)" fill="#b4ff00" stroke="#b4ff00">CR=0.34 c</text>
            <path d="M677 329L782 285" stroke="#bdbdbd" stroke-width="3" />
            <path d="M899 595L914 588" stroke="#9a5000" /><path d="M914 588L927 595" stroke="#ff7800" />
            <g v-for="n in nodes" :key="n[2]">
              <path :d="`M${n[0] - 3} ${n[1] - 2}l6 4m0 -4l-6 4`" stroke="#6e4a00" />
              <text :x="n[0] + 1" :y="n[1] - 3" class="nlabel">{{ n[2] }}</text>
            </g>
            <g class="axes">
              <path d="M1481 241V219" stroke="#0040ff" /><rect x="1479" y="216" width="4" height="5" fill="#0040ff" />
              <path d="M1481 241L1466 231" stroke="#0a7a10" /><circle cx="1465" cy="231" r="2" fill="#0a7a10" />
              <path d="M1481 241L1501 232" stroke="#f00" /><rect x="1499" y="230" width="4" height="4" fill="#f00" />
              <text x="1482" y="213" fill="#0040ff">z</text><text x="1465" y="228" fill="#3a7a20">y</text><text x="1504" y="229" fill="#f00">x</text>
            </g>
          </svg>
          <div class="legend"><span v-for="s in scale" :key="s.cls" :class="s.cls">{{ s.label }}</span></div>
        </div>

        <section class="bench">
          <header class="phead">
            <h2>Παράθυρο Εργασίας 1</h2>
            <button v-for="k in ['caret', 'pin', 'close']" :key="k" type="button" :aria-label="k"><svg viewBox="0 0 12 13" v-html="icons[k]" /></button>
          </header>
          <div class="tools wide">
            <button type="button" class="txt"><svg viewBox="0 0 16 16" v-html="icons.text" />Κείμενο Αποτελεσμάτων</button><i class="bar"></i>
            <button type="button" class="txt"><svg viewBox="0 0 16 16" v-html="icons.sync" />Συγχρονισμός</button><i class="bar"></i>
            <button type="button" class="tb" aria-label="clock"><svg viewBox="0 0 16 16" v-html="icons.clock" /></button>
            <button type="button" class="txt on"><svg viewBox="0 0 16 16" v-html="icons.globe" />Εμφάνιση Γραφημάτων Πάντα</button><i class="bar"></i>
            <button type="button" class="txt">Επιλεγμένα</button><button type="button" class="txt on">Εικονιζόμενα</button><button type="button" class="txt">Όλα</button><i class="bar"></i>
            <button type="button" class="txt"><svg viewBox="0 0 16 16" v-html="icons.help" />Συντομογραφίες</button>
          </div>
          <div class="sheet">
            <table>
              <colgroup><col class="c-no" /><col class="c-name" /><col class="c-val" /><col class="c-val" /><col class="c-last" /></colgroup>
              <thead>
                <tr><th colspan="5">Αποτελέσματα Ελέγχου Επάρκειας Αντοχής Δοκών</th></tr>
                <tr><th>α/α</th><th>Όνομα</th><th>Κάμψη</th><th>Διάτμηση</th><th>Στρέψη</th></tr>
              </thead>
              <tbody>
                <tr v-for="(r, i) in results" :key="r[0]">
                  <td class="no">{{ i + 1 }}</td>
                  <td>{{ r[0] }}</td>
                  <td><div class="val"><svg viewBox="0 0 16 16" v-html="icons[r[3] ? 'ok' : 'warn']" />{{ r[1] }}</div></td>
                  <td><div class="val"><svg viewBox="0 0 16 16" v-html="icons.ok" />{{ r[2] }}</div></td>
                  <td><div class="val"><svg viewBox="0 0 16 16" v-html="icons.ok" />0.00</div></td>
                </tr>
                <tr><td class="no"></td><td></td><td></td><td></td><td></td></tr>
              </tbody>
            </table>
            <i class="thumb third"></i>
          </div>
          <nav class="tabs">
            <button type="button" class="tab on"><svg viewBox="0 0 16 16" v-html="icons.win1" />Παράθυρο Εργασίας 1</button>
            <button type="button" class="tab"><svg viewBox="0 0 16 16" v-html="icons.home" />Βοήθεια</button>
            <button type="button" class="tab"><svg viewBox="0 0 16 16" v-html="icons.win2" />Παράθυρο Εργασίας 2</button>
            <button type="button" class="tab"><svg viewBox="0 0 16 16" v-html="icons.clip" />Εμφ. Αποτελ.</button>
          </nav>
        </section>
      </section>

      <aside class="right">
        <header class="rhead"><h2>Έλεγχοι Επάρκειας - Πληροφορίες</h2><button type="button" aria-label="Σύμπτυξη"><i></i></button></header>
        <button type="button" class="check" disabled>Έλεγχος</button>
        <table class="props">
          <colgroup><col class="p-mark" /><col class="p-name" /><col /></colgroup>
          <thead><tr><th colspan="2">Ιδιότητα</th><th>Τιμή</th></tr></thead>
          <tbody>
            <tr v-for="(p, i) in props" :key="i" :class="{ head: p.head }">
              <td class="m"><i v-if="p.head" class="open"></i></td>
              <th v-if="p.head" colspan="2" scope="rowgroup">{{ p.name }}</th>
              <template v-else>
                <td><label :for="'p' + i">{{ p.name }}</label></td>
                <td><output v-if="p.value" :id="'p' + i">{{ p.value }}</output><span v-else class="sw"><input :id="'p' + i" v-model="p.on" type="checkbox" />{{ p.on ? 'On' : 'Off' }}</span></td>
              </template>
            </tr>
          </tbody>
        </table>
        <div class="rest"></div>
        <div class="desc"></div>
        <div class="split"><i v-for="d in 10" :key="d"></i></div>
        <div class="dock">
          <button v-for="k in dock" :key="k" type="button" :aria-label="k" :class="{ on: k === 'crSmall' }"><svg viewBox="0 0 16 16" v-html="icons[k]" /></button>
          <button type="button" class="more" aria-label="Περισσότερα"><svg viewBox="0 0 10 16"><path d="M1 1l3 3-3 3M5 1l3 3-3 3" fill="none" stroke="#888" stroke-width="1.200" /><path d="M2 12h5l-2.500 3z" fill="#888" /></svg></button>
        </div>
      </aside>
    </main>

    <footer class="status">
      <a href="#" class="site">www.tol.com.gr</a>
      <button type="button" class="sicon" aria-label="Πίνακας"><svg viewBox="0 0 16 16" v-html="icons.grid" /><svg class="mini" viewBox="0 0 12 12" v-html="icons.chev" /></button>
      <button type="button" class="sicon" aria-label="Γλώσσα"><svg viewBox="0 0 16 16" v-html="icons.flag" /></button>
      <span class="codes">ΕΥΡΩΚΩΔΙΚΕΣ | Ιδιομορφική | Κ.Π.Μ. | q=3.50 | Σχεδιασμού | Τύπος 1</span>
      <span class="project">Νέο Έργο</span>
      <button type="button" class="sicon locker" aria-label="Κλείδωμα"><svg viewBox="0 0 16 16" v-html="icons.lock" /></button>
      <span class="snap">
        <button type="button">κάναβος<svg class="mini" viewBox="0 0 12 12" v-html="icons.chev" /></button>
        <button type="button">έλξη</button><button type="button" class="on">dxf</button><button type="button">έλξη</button><button type="button" class="on wideb">κάθετα</button>
        <button type="button" class="pm" aria-label="Σμίκρυνση"><i></i></button>
        <input v-model="zoom" type="range" min="0" max="100" aria-label="Ζουμ" />
        <button type="button" class="pm plus" aria-label="Μεγέθυνση"><i></i></button>
      </span>
    </footer>
  </div>
</template>

<style>
body { margin: 0; }
</style>

<style scoped>
.app { display: flex; flex-direction: column; height: 100vh; overflow: hidden; background: #e6e6e6; color: #444; font: 11px/15px "Noto Sans", "Open Sans", sans-serif; }
.app * { box-sizing: border-box; }
button, input, select { margin: 0; padding: 0; border: 0; background: none; color: inherit; font: inherit; }
button { white-space: nowrap; }
svg { display: block; flex: none; }
i { flex: none; }
h2 { margin: 0; font-weight: 400; }
.menu, .tell, .ribbon, .txt, .snap, .sheet th { font-size: 12px; }

.menubar { position: relative; display: flex; flex: none; height: 26px; background: #2b579a; color: #fff; }
.swirl { position: absolute; top: 0; right: 46px; width: 380px; height: 26px; fill: none; stroke: #1f4580; stroke-width: 4; }
.menubar > button, .menubar > span, .tell { position: relative; }
.file { width: 62px; padding-right: 8px; }
.menu { padding: 0 14px; }
.menu.active { background: #f0f0f0; color: #1e5fc0; border: 1px solid #d4d4d4; border-bottom: 0; height: 27px; padding: 0 13px; }
.tell { display: flex; align-items: center; margin: 0 auto 0 12px; }
.tell svg { width: 16px; height: 16px; margin-right: 10px; }
.tell input { width: 180px; }
.tell input::placeholder { color: #b9c8e0; opacity: 1; }
.product { line-height: 26px; margin-right: 8px; }
.style { display: flex; align-items: center; gap: 3px; margin-right: 1px; }
.style svg { width: 12px; height: 12px; }

.ribbon { display: flex; flex: none; height: 99px; background: #f0f0f0; border-top: 1px solid #d4d4d4; border-bottom: 1px solid #d4d4d4; }
.group { display: flex; flex-direction: column; flex: none; margin: 2px 0; border-right: 1px solid #d4d4d4; align-items: center; }
.grp-all { width: 123px; }
.grp-all .cmds { gap: 4px; }
.grp-kind { width: 686px; }
.grp-elastic { width: 109px; }
.grp-pushover { width: 171px; }
.grp-crit { width: 207px; }
.cmds { display: flex; height: 74px; padding-top: 2px; }
.cmd { display: flex; flex-direction: column; align-items: center; height: 70px; padding: 3px 1px 0; }
.cmd > svg { width: 32px; height: 32px; margin-bottom: 3px; }
.cmd span { display: flex; align-items: center; }
.cmd.on { background: #c5c5c5; box-shadow: inset 0 0 0 1px #2b579a; padding: 3px 2px 0; }
.mini { width: 10px; height: 10px; }
.vsep { width: 1px; height: 61px; margin: 5px 3px 0; background: #d4d4d4; }
.gtitle { color: #666; white-space: nowrap; }
.crit { display: flex; flex-direction: column; align-items: flex-start; align-self: stretch; height: 74px; padding: 7px 0 0 12px; gap: 6px; }
.crit label, .crit button { display: flex; align-items: center; gap: 5px; height: 15px; }
.crit svg { width: 12px; height: 12px; }

.chk, .rad { appearance: none; flex: none; position: relative; width: 11px; height: 11px; background: #fff; border: 1px solid #999; }
.chk:checked::before { content: ""; position: absolute; left: 3px; top: 0; width: 3px; height: 6px; border: solid #777; border-width: 0 2px 2px 0; transform: rotate(42deg); }
.rad { border-radius: 50%; }
.rad:checked::before { content: ""; position: absolute; inset: 2px; border-radius: 50%; background: #444; }

.work { display: flex; flex: 1; min-height: 0; }
.left { display: flex; flex-direction: column; width: 332px; flex: none; }
.panel { display: flex; flex-direction: column; min-height: 0; }
.display { flex: 1; }
.navig { flex: none; height: 347px; }
.phead { display: flex; flex: none; align-items: center; height: 40px; padding-right: 2px; }
.navig .phead, .bench .phead { height: 46px; padding-top: 8px; }
.phead h2 { flex: 1; padding-left: 2px; font-size: 20px; line-height: 28px; }
.phead button { width: 19px; height: 19px; display: grid; place-items: center; }
.phead svg { width: 12px; height: 13px; }
.tools { display: flex; flex: none; background: #efefef; }
.tools.two { flex-direction: column; height: 55px; padding-top: 1px; }
.trow { display: flex; align-items: center; height: 26px; padding-left: 9px; }
.trow.second { padding-left: 7px; }
.combo { width: 66px; height: 21px; margin-right: 2px; background: #fff; border: 1px solid #bbb; position: relative; }
.combo select { appearance: none; width: 100%; height: 100%; padding-left: 3px; }
.combo::after { content: ""; position: absolute; right: 4px; top: 8px; border: 3px solid transparent; border-top: 3px solid #666; border-bottom: 0; }
.tb { display: grid; place-items: center; width: 22px; height: 20px; }
.tb svg { width: 16px; height: 16px; }
.tb.on { background: #cdcdcd; }
.gap { width: 9px; }
.tri { margin: 0 12px 0 5px; border: 3px solid transparent; border-top: 3px solid #666; border-bottom: 0; }
.tree { position: relative; flex: 1; min-height: 0; overflow: hidden; background: #fff; border: 1px solid #ccc; border-left: 0; font: 11px/17px Roboto, "Noto Sans", sans-serif; }
.scrolled { margin-top: -4px; }
.node { display: flex; align-items: center; height: 17px; }
.cell { position: relative; flex: none; width: 17px; height: 17px; }
.g-bar::before, .g-tee::before, .g-end::before { content: ""; position: absolute; left: 8px; top: 0; width: 1px; height: 17px; background: #ccc; }
.g-end::before { height: 9px; }
.g-tee::after, .g-end::after { content: ""; position: absolute; left: 8px; top: 8px; width: 9px; height: 1px; background: #ccc; }
.closed, .open { position: absolute; left: 5px; top: 5px; width: 7px; height: 8px; z-index: 1; }
.closed { background: #999; clip-path: polygon(0 0, 100% 50%, 0 100%); }
.closed::after { content: ""; position: absolute; inset: 0; background: #fff; clip-path: polygon(16% 20%, 78% 50%, 16% 80%); }
.open { background: #888; clip-path: polygon(100% 10%, 100% 90%, 10% 90%); }
.node .chk, .node .rad { margin: 0 3px; }
.item { display: flex; align-items: center; gap: 3px; height: 17px; white-space: nowrap; flex: 1; margin-right: 19px; margin-left: 3px; }
.item svg { width: 16px; height: 16px; }
.item.sel { background: #f0f0f0; }
.item.bold { color: #000; font-weight: 700; }
.thumb { position: absolute; right: 2px; width: 2px; background: #a0a0a0; }
.first { top: 18px; height: 328px; }
.second { top: 110px; height: 61px; }
.third { top: 18px; height: 104px; right: 8px; background: #888; }
.pick { height: 27px; align-items: flex-start; padding: 2px 0 0 7px; }
.tabs { display: flex; flex: none; height: 23px; border-top: 1px solid #ccc; border-bottom: 1px solid #ccc; }
.tab { display: flex; align-items: center; gap: 3px; height: 21px; padding: 0 5px; }
.bench .tab { gap: 4px; padding: 0 5px; }
.bench .tab + .tab { padding: 0 6px; }
.left .tab { padding-left: 2px; }
.left .tab + .tab { margin-left: 4px; }
.tab svg { width: 16px; height: 16px; }
.tab.on { background: #fff; border-right: 1px solid #aaa; border-bottom: 1px solid #aaa; }
.one, .wide { height: 24px; align-items: center; }
.one { padding-left: 8px; }
.one .bar { margin: 0 5px; }
.txt { display: flex; align-items: center; gap: 2px; height: 19px; padding: 0 3px; }
.txt svg { width: 16px; height: 16px; }
.txt.on { background: #cdcdcd; }
.bar { width: 1px; height: 19px; margin: 0 4px; background: #ccc; }

.centre { display: flex; flex-direction: column; flex: 1; min-width: 0; margin-left: 6px; border-left: 1px solid #bbb; }
.strip { flex: none; height: 75px; margin-bottom: 6px; background: #efefef; }
.arrows { display: flex; flex-direction: column; justify-content: space-between; align-items: center; float: right; width: 16px; height: 75px; padding: 6px 0 5px; border-left: 1px solid #fff; }
.au { border: 4px solid transparent; border-top: 0; border-bottom: 6px solid #999; }
.ad { border: 4px solid transparent; border-bottom: 0; border-top: 6px solid #999; }
.view { display: flex; flex-direction: column; flex: 1; min-height: 0; background: #fff; border: 2px solid #a0a0a0; border-top-color: #777; border-left: 1px solid #646464; border-right: 2px solid #ddd; border-bottom: 1px solid #ccc; }
.model { width: 100%; flex: 1; min-height: 0; font-family: "Liberation Sans", sans-serif; }
.mlabel { font-size: 6px; font-style: italic; stroke-width: 0; text-anchor: middle; }
.nlabel { font-size: 5px; fill: #903050; }
.axes { font-size: 13px; stroke-width: 2; }
.axes text { stroke: none; }
.legend { display: flex; flex: none; gap: 1px; height: 24px; margin: 0 1px 1px; }
.legend span { flex: 1; padding-left: 6px; line-height: 27px; color: #222; }
.l-y { background: #ff0; }
.l-g { background: #0f0; }
.l-c { background: #0ff; }
.l-m { background: #f0f; }
.l-r { background: #f00; }
.l-n { background: #c0c0c0; }
.bench { display: flex; flex-direction: column; flex: none; height: 346px; }
.bench .phead h2 { padding-left: 3px; }
.wide { padding-left: 8px; }
.sheet { position: relative; flex: 1; min-height: 0; overflow: hidden; background: #f0f0f0; border: 1px solid #646464; border-left: 0; margin-bottom: 2px; }
.sheet table { width: 467px; table-layout: fixed; border-collapse: separate; border-spacing: 0; color: #000; }
.sheet th { height: 25px; padding: 0; border-right: 1px solid #000; border-bottom: 1px solid #000; font-weight: 400; }
.sheet td { height: 18px; padding: 0 3px 0 2px; border-right: 1px solid #646464; border-bottom: 1px solid #646464; background: #fff; line-height: 17px; }
.sheet td.no { background: #f0f0f0; text-align: right; border-color: #000; padding: 0 2px 0 0; }
.c-no { width: 30px; }
.c-name { width: 100px; }
.c-val { width: 110px; }
.c-last { width: 117px; }
.val { display: flex; justify-content: space-between; align-items: center; height: 17px; }
.val svg { width: 14px; height: 14px; }

.right { display: flex; flex-direction: column; flex: none; width: 400px; border-left: 1px solid #bbb; padding-left: 7px; }
.rhead { display: flex; height: 45px; flex: none; }
.rhead h2 { flex: 1; padding: 10px 0 0 3px; font-size: 20px; line-height: 28px; }
.rhead button { width: 12px; height: 22px; display: grid; place-items: center; }
.rhead i { border: 4px solid transparent; border-left: 0; border-right: 4px solid #777; }
.check { flex: none; height: 24px; margin-bottom: 2px; padding-left: 31px; background: #efefef; color: #aaa; text-align: left; font: 11px/24px Roboto, sans-serif; }
.props { flex: none; width: 100%; table-layout: fixed; border-collapse: separate; border-spacing: 0; background: #fff; font: 11px/16px Roboto, "Noto Sans", sans-serif; }
.props thead th { height: 21px; padding: 0 3px; background: #efefef; border: 1px solid #ccc; text-align: left; font-weight: 400; font-size: 12px; }
.p-mark { width: 17px; }
.p-name { width: 140px; }
.props tbody td { height: 17px; padding: 0 4px; white-space: nowrap; border-bottom: 1px solid #efefef; }
.props tbody td:nth-child(2) { border-right: 1px solid #efefef; }
.props tbody th { height: 17px; padding: 0 4px; background: #efefef; text-align: left; font-weight: 700; font-size: 13px; line-height: 17px; }
.props tbody td.m { position: relative; background: #efefef; padding: 0; }
.sw { display: flex; align-items: center; gap: 4px; }
.sw input { appearance: none; position: relative; width: 25px; height: 11px; border-radius: 6px; background: #2b579a; }
.sw input::before { content: ""; position: absolute; right: 1px; top: 1px; width: 9px; height: 9px; border-radius: 50%; background: #fff; }
.rest { flex: 1; min-height: 0; background: linear-gradient(#efefef, #efefef) 156px 0 / 1px 100% no-repeat #fff; }
.desc { flex: none; height: 80px; margin: 4px 0; background: #efefef; }
.split { display: flex; flex: none; justify-content: center; align-items: center; gap: 3px; height: 8px; background: #cdcdcd; }
.split i { width: 3px; height: 3px; background: #999; border: solid #fff; border-width: 0 1px 1px 0; }
.dock { display: flex; flex: none; justify-content: flex-end; height: 31px; padding: 1px 0; background: #efefef; border-bottom: 1px solid #ccc; }
.dock button { display: grid; place-items: center; width: 26px; }
.dock svg { width: 16px; height: 16px; }
.dock .on { background: #cdcdcd; }
.dock .more { width: 25px; }

.status { display: flex; align-items: center; flex: none; height: 22px; padding-left: 7px; background: #f0f0f0; border-top: 1px solid #ccc; }
.site { width: 446px; color: inherit; text-decoration: none; font-size: 12px; }
.sicon { display: flex; align-items: center; margin-right: 4px; }
.sicon svg { width: 16px; height: 16px; }
.sicon .mini { width: 12px; height: 12px; }
.codes { width: 457px; margin-left: 10px; }
.project { flex: 1; }
.locker { margin-right: 184px; }
.locker svg { width: 18px; height: 18px; }
.snap { display: flex; align-items: center; height: 21px; }
.snap button { display: flex; align-items: center; gap: 3px; height: 20px; padding: 0 3px; }
.snap .on { background: #cdcdcd; border: 1px solid #2b579a; }
.snap .wideb { margin-left: 5px; }
.snap .pm { width: 22px; margin-left: 3px; justify-content: center; position: relative; }
.snap .plus { width: 18px; }
.pm i { width: 8px; height: 2px; background: #888; position: relative; }
.plus i::after { content: ""; position: absolute; left: 3px; top: -3px; width: 2px; height: 8px; background: #888; }
.snap input { appearance: none; width: 87px; height: 15px; background: linear-gradient(#999, #999) 0 7px / 100% 1px no-repeat; }
.snap input::-webkit-slider-thumb { appearance: none; width: 5px; height: 14px; background: #666; }
</style>
